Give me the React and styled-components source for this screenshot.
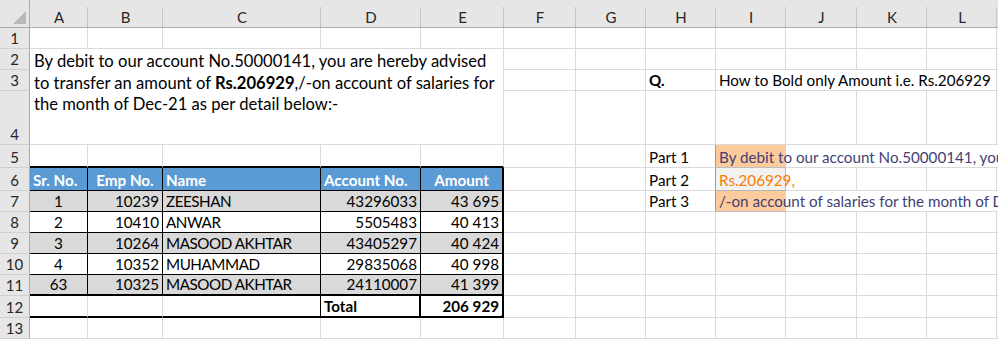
import React from "react";
import styled, { createGlobalStyle } from "styled-components";

const Global = createGlobalStyle`
  html, body { margin: 0; padding: 0; background: #fff; overflow: hidden; }
  body { font-family: Lato, "Noto Sans", sans-serif; }
`;

const GRID = "#dadada";
const HEAD_BG = "#e6e6e6";
const HEAD_LINE = "#ababab";
const BLACK1 = "1px solid #000";
const BLACK2 = "2px solid #000";

const Sheet = styled.div`
  width: 998px;
  height: 340px;
  overflow: hidden;
  display: grid;
  grid-template-columns: 30px 58px 75px 158px 100px 83px 72px 70px 70px 70px 71px 70px 70px 30px;
  grid-template-rows: 28px 21px 21px 21px 54px 23px 23px 21px 21px 21px 21px 21px 22px 21px;
  font-size: 15.2px;
  color: #000;
`;

const Corner = styled.div`
  box-sizing: border-box;
  background: ${HEAD_BG};
  border-right: 1px solid ${HEAD_LINE};
  border-bottom: 1px solid ${HEAD_LINE};
  display: flex;
  align-items: flex-end;
  justify-content: flex-end;
  padding: 0 3px 3px 0;
`;

const ColHead = styled.div`
  box-sizing: border-box;
  background:
    linear-gradient(#c6c6c6, #c6c6c6) right 7px / 1px calc(100% - 7px) no-repeat,
    ${HEAD_BG};
  border-bottom: 1px solid ${HEAD_LINE};
  display: flex;
  align-items: center;
  justify-content: center;
  padding-top: 7px;
  font-size: 15px;
  color: #262626;
`;

const RowHead = styled.div`
  box-sizing: border-box;
  background: ${HEAD_BG};
  border-right: 1px solid ${HEAD_LINE};
  border-bottom: 1px solid #cfcfcf;
  display: flex;
  align-items: flex-end;
  justify-content: center;
  padding-bottom: 1px;
  font-size: 15px;
  color: #262626;
  grid-column: 1;
`;

const Cell = styled.div`
  box-sizing: border-box;
  position: relative;
  min-width: 0;
  display: flex;
  align-items: flex-end;
  justify-content: ${(p) =>
    p.$align === "right" ? "flex-end" : p.$align === "center" ? "center" : "flex-start"};
  padding: 0 3px 1px 3px;
  border-right: ${(p) => p.$r || `1px solid ${GRID}`};
  border-bottom: ${(p) => p.$b || `1px solid ${GRID}`};
  background: ${(p) => p.$bg || "#fff"};
  color: ${(p) => p.$color || "#000"};
  font-weight: ${(p) => (p.$bold ? 700 : 400)};
  letter-spacing: ${(p) => (p.$caps ? "-0.45px" : "normal")};
  white-space: nowrap;
  overflow: ${(p) => (p.$spill ? "visible" : "hidden")};
  z-index: ${(p) => (p.$spill ? 1 : "auto")};
`;

const Merged = styled.div`
  box-sizing: border-box;
  grid-column: span 5;
  grid-row: span 3;
  border-right: 1px solid ${GRID};
  border-bottom: 1px solid ${GRID};
  padding: 2px 4px 0 4px;
  font-size: 16.6px;
  line-height: 21.5px;
  background: #fff;
`;

const Handle = styled.span`
  position: absolute;
  right: -3px;
  bottom: -3px;
  width: 5px;
  height: 5px;
  background: #4472c4;
  border: 1px solid #fff;
  box-sizing: border-box;
`;

const cols = ["A", "B", "C", "D", "E", "F", "G", "H", "I", "J", "K", "L", ""];

const data = [
  ["1", "10239", "ZEESHAN", "43296033", "43 695"],
  ["2", "10410", "ANWAR", "5505483", "40 413"],
  ["3", "10264", "MASOOD AKHTAR", "43405297", "40 424"],
  ["4", "10352", "MUHAMMAD", "29835068", "40 998"],
  ["63", "10325", "MASOOD AKHTAR", "24110007", "41 399"],
];

const aligns = ["center", "right", "left", "right", "right"];

const INPUT_BG = "#fdca9b";
const INPUT_FG = "#3f3f76";

function Blank({ letters, ...rest }) {
  return letters.map((l) => <Cell key={l} {...rest} />);
}

export default function App() {
  const tableRight = (i) => (i === 4 ? BLACK2 : BLACK1);
  return (
    <>
      <Global />
      <Sheet>
        {/* header */}
        <Corner>
          <svg width="13" height="13" viewBox="0 0 13 13">
            <polygon points="13,0 13,13 0,13" fill="#b9b9b9" />
          </svg>
        </Corner>
        {cols.map((c, i) => (
          <ColHead key={i}>{c}</ColHead>
        ))}

        {/* row 1 */}
        <RowHead>1</RowHead>
        <Blank letters={cols.map((c, i) => "r1" + i)} />

        {/* row 2 */}
        <RowHead>2</RowHead>
        <Merged>
          By debit to our account No.50000141, you are hereby advised
          <br />
          to transfer an amount of <b>Rs.206929</b>,/-on account of salaries for
          <br />
          the month of Dec-21 as per detail below:-
        </Merged>
        <Blank letters={["F2", "G2", "H2", "I2", "J2", "K2", "L2", "M2"]} />

        {/* row 3 */}
        <RowHead>3</RowHead>
        <Blank letters={["F3", "G3"]} />
        <Cell $bold>Q.</Cell>
        <Cell $spill $r="none">How to Bold only Amount i.e. Rs.206929</Cell>
        <Cell $r="none" />
        <Cell $r="none" />
        <Cell />
        <Cell />

        {/* row 4 */}
        <RowHead>4</RowHead>
        <Blank letters={["F4", "G4", "H4", "I4", "J4", "K4", "L4", "M4"]} />

        {/* row 5 */}
        <RowHead>5</RowHead>
        <Blank letters={["A5", "B5", "C5", "D5", "E5"]} $b={BLACK2} />
        <Blank letters={["F5", "G5"]} />
        <Cell $r="1px solid #9c9c9c">Part 1</Cell>
        <Cell $spill $r="none" $bg={INPUT_BG} $color={INPUT_FG} $b="1px solid #bdbdbd">
          By debit to our account No.50000141, you are hereby advised
        </Cell>
        <Cell $r="none" />
        <Cell $r="none" />
        <Cell $r="none" />
        <Cell $r="none" />

        {/* row 6 - table header */}
        <RowHead>6</RowHead>
        {["Sr. No.", "Emp No.", "Name", "Account No.", "Amount"].map((h, i) => (
          <Cell
            key={h}
            $bg="#5b9bd5"
            $color="#fff"
            $bold
            $align={i === 1 || i === 4 ? "center" : "left"}
            $r={tableRight(i)}
            $b={BLACK1}
          >
            {h}
          </Cell>
        ))}
        <Blank letters={["F6", "G6"]} />
        <Cell $r="1px solid #9c9c9c">Part 2</Cell>
        <Cell $spill $bg="#f2f2f2" $color="#fa7d00" $r="1px solid #b5b5b5" $b="1px solid #b5b5b5">
          Rs.206929,
        </Cell>
        <Blank letters={["J6", "K6", "L6", "M6"]} />

        {/* data rows 7-11 */}
        {data.map((row, ri) => (
          <React.Fragment key={ri}>
            <RowHead>{7 + ri}</RowHead>
            {row.map((v, ci) => (
              <Cell
                key={ci}
                $align={aligns[ci]}
                $caps={ci === 2}
                $bg={ri % 2 === 0 ? "#d9d9d9" : "#fff"}
                $r={tableRight(ci)}
                $b={ri === 4 ? BLACK2 : BLACK1}
              >
                {v}
              </Cell>
            ))}
            {ri === 0 ? (
              <>
                <Blank letters={["F7", "G7"]} />
                <Cell $r="1px solid #9c9c9c">Part 3</Cell>
                <Cell $spill $r="none" $bg={INPUT_BG} $color={INPUT_FG} $b="1px solid #bdbdbd">
                  /-on account of salaries for the month of Dec-21 as per detail below:-
                </Cell>
                <Cell $r="none" />
                <Cell $r="none" />
                <Cell $r="none" />
                <Cell $r="none" />
              </>
            ) : (
              <Blank letters={["F", "G", "H", "I", "J", "K", "L", "M"].map((l) => l + (7 + ri))} />
            )}
          </React.Fragment>
        ))}

        {/* row 12 - total */}
        <RowHead>12</RowHead>
        <Cell $b={BLACK2} />
        <Cell $b={BLACK2} />
        <Cell $b={BLACK2} $r={BLACK1} />
        <Cell $b={BLACK2} $r={BLACK2} $bold>
          Total
        </Cell>
        <Cell $b={BLACK2} $r={BLACK2} $bold $align="right">
          206 929
          <Handle />
        </Cell>
        <Blank letters={["F", "G", "H", "I", "J", "K", "L", "M"].map((l) => l + "12")} />

        {/* row 13 */}
        <RowHead>13</RowHead>
        <Blank letters={cols.map((c, i) => "r13" + i)} />
      </Sheet>
    </>
  );
}
